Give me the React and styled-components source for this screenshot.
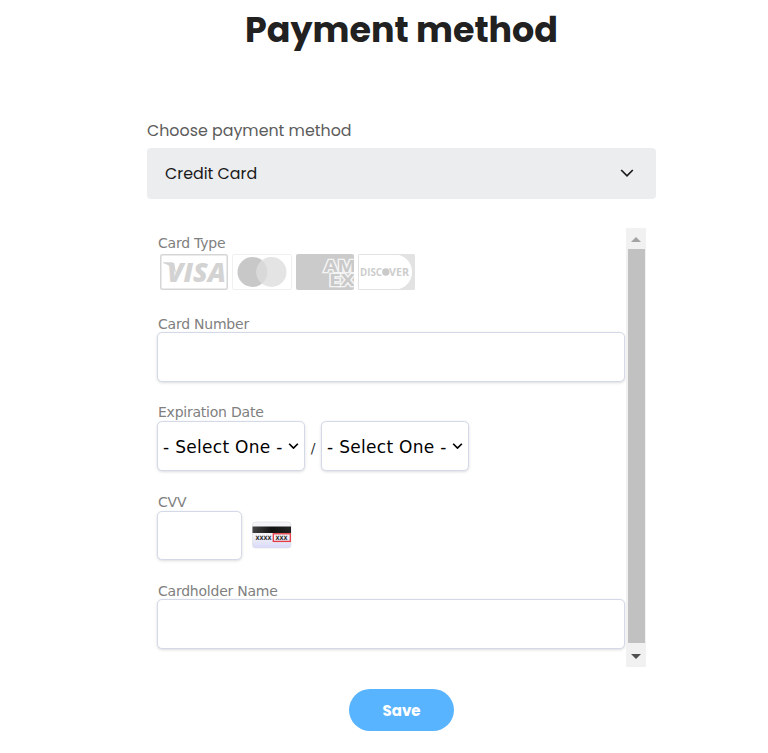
import React from 'react';
import styled, { createGlobalStyle } from 'styled-components';

const GlobalStyle = createGlobalStyle`
  * {
    box-sizing: border-box;
  }

  body {
    margin: 0;
    background: #ffffff;
    font-family: Poppins, Inter, sans-serif;
  }
`;

const Page = styled.main`
  display: flex;
  flex-direction: column;
  width: 509px;
  margin-left: 147px;
`;

const Title = styled.h1`
  margin: 0;
  height: 59px;
  line-height: 59px;
  font-size: 34.9px;
  font-weight: 700;
  color: #212121;
  text-align: center;
  white-space: nowrap;
`;

const MethodLabel = styled.label`
  margin-top: 60px;
  height: 29px;
  line-height: 24px;
  font-size: 15.85px;
  color: #5c5c5c;
`;

const MethodSelect = styled.button`
  display: flex;
  align-items: center;
  justify-content: space-between;
  height: 51px;
  padding: 0 22px 1px 18px;
  border: none;
  border-radius: 4px;
  background: #ecedef;
  font-family: inherit;
  font-size: 15.85px;
  color: #1a1a1a;
`;

const Frame = styled.section`
  display: flex;
  width: 499px;
  height: 439px;
  margin-top: 29px;
  font-family: Verdana, 'DejaVu Sans', sans-serif;
`;

const Form = styled.form`
  width: 479px;
  padding: 7px 0 0 10px;
`;

const Field = styled.div`
  display: flex;
  flex-direction: column;
  height: ${({ $height }) => $height}px;
`;

const FieldLabel = styled.label`
  height: ${({ $height }) => $height || 16}px;
  line-height: 16px;
  padding-left: 1px;
  font-size: 14px;
  letter-spacing: -0.23px;
  color: #808080;
  white-space: nowrap;
`;

const TextInput = styled.input`
  width: ${({ $width }) => $width}px;
  height: ${({ $height }) => $height || 50}px;
  border: 1px solid #d3d9e8;
  border-radius: 5px;
  background: #ffffff;
  box-shadow: 0 1px 3px rgba(0, 0, 0, 0.14);
`;

const DateRow = styled.div`
  display: flex;
  align-items: center;
`;

const DateSelect = styled.button`
  display: flex;
  align-items: center;
  justify-content: space-between;
  width: 148px;
  height: 50px;
  padding: 2px 5px 0;
  border: 1px solid #d3d9e8;
  border-radius: 5px;
  background: #ffffff;
  box-shadow: 0 1px 3px rgba(0, 0, 0, 0.14);
  font-family: inherit;
  font-size: 17px;
  letter-spacing: 0.3px;
  color: #000000;
  white-space: nowrap;

  svg {
    margin-bottom: 2px;
  }
`;

const Slash = styled.span`
  width: 16px;
  padding-top: 3px;
  font-size: 14px;
  color: #333333;
  text-align: center;
`;

const CardRow = styled.div`
  display: flex;
  gap: 4px;
  padding-left: 3px;
`;

const CvvRow = styled.div`
  display: flex;
  align-items: center;
  gap: 10px;

  svg {
    margin-bottom: 1px;
  }
`;

const ScrollBar = styled.div`
  display: flex;
  flex-direction: column;
  align-items: center;
  width: 20px;
  background: #f1f1f1;
`;

const ScrollArrow = styled.div`
  display: flex;
  align-items: center;
  justify-content: center;
  height: ${({ $height }) => $height}px;
  padding-top: 2px;
  color: ${({ $color }) => $color};
`;

const ScrollThumb = styled.div`
  flex: 1;
  width: 17px;
  margin-left: 1px;
  background: #c1c1c1;
`;

const SaveButton = styled.button`
  align-self: center;
  width: 105px;
  height: 42px;
  margin-top: 22px;
  border: none;
  border-radius: 21px;
  background: #59b4ff;
  font-family: inherit;
  font-size: 15px;
  font-weight: 700;
  color: #ffffff;
`;

function VisaLogo() {
  return (
    <svg width="68" height="36" viewBox="0 0 68 36">
      <rect x="0.75" y="0.75" width="66.5" height="34.5" rx="1.5" fill="#fff" stroke="#d6d6d6" strokeWidth="1.5" />
      <text
        x="7"
        y="27.5"
        fontFamily="Open Sans, sans-serif"
        fontSize="27"
        fontWeight="800"
        fontStyle="italic"
        fill="#d3d3d3"
        textLength="59"
        lengthAdjust="spacingAndGlyphs"
      >
        VISA
      </text>
      <path d="M3 8.3H12Q14 8.3 14.5 11L16 19Q11 11 3 9z" fill="#d3d3d3" />
    </svg>
  );
}

function MastercardLogo() {
  return (
    <svg width="60" height="36" viewBox="0 0 60 36">
      <rect x="0.5" y="0.5" width="59" height="35" rx="1.5" fill="#fff" stroke="#f0f0f0" />
      <circle cx="20.5" cy="18" r="15" fill="#c8c8c8" />
      <circle cx="39.5" cy="18" r="15" fill="#e4e4e4" />
      <path d="M30 6.4a15 15 0 0 1 0 23.2a15 15 0 0 1 0-23.2z" fill="#d9d9d9" />
    </svg>
  );
}

function AmexLogo() {
  return (
    <svg width="58" height="36" viewBox="0 0 58 36">
      <rect width="58" height="36" rx="2" fill="#cbcbcb" />
      <g
        fontFamily="Open Sans, sans-serif"
        fontSize="16"
        fontWeight="700"
        fill="#c9c9c9"
        stroke="#f4f4f4"
        strokeWidth="2.6"
        paintOrder="stroke"
      >
        <text x="28" y="17.5" textLength="32" lengthAdjust="spacingAndGlyphs">AM</text>
        <text x="33" y="31.5" textLength="26" lengthAdjust="spacingAndGlyphs">EX</text>
      </g>
    </svg>
  );
}

function DiscoverLogo() {
  return (
    <svg width="57" height="36" viewBox="0 0 57 36">
      <rect width="57" height="36" rx="1.5" fill="#e2e2e2" />
      <path d="M1 1H41C49 3 54 10 54 18S49 33 41 35H1z" fill="#fff" />
      <g fontFamily="Open Sans, sans-serif" fontSize="10.5" fontWeight="700" fill="#cdcdcd">
        <text x="2" y="21.8" textLength="22" lengthAdjust="spacingAndGlyphs">DISC</text>
        <text x="31" y="21.8" textLength="20" lengthAdjust="spacingAndGlyphs">VER</text>
      </g>
      <circle cx="27.8" cy="18" r="3.7" fill="#cacaca" />
    </svg>
  );
}

function CvvCard() {
  return (
    <svg width="40" height="28" viewBox="0 0 40 28">
      <defs>
        <linearGradient id="card" x2="0" y2="1">
          <stop offset="0.5" stopColor="#f4f4f8" />
          <stop offset="1" stopColor="#d9d9fa" />
        </linearGradient>
        <linearGradient id="stripe">
          <stop offset="0" stopColor="#444" />
          <stop offset="0.5" stopColor="#111" />
          <stop offset="1" stopColor="#222" />
        </linearGradient>
      </defs>
      <rect x="0.5" y="1" width="38.5" height="26" rx="3" fill="url(#card)" stroke="#dedee4" strokeWidth="0.7" />
      <rect x="0.5" y="5.5" width="38.5" height="6.5" fill="url(#stripe)" />
      <g fontFamily="DejaVu Sans, sans-serif" fontSize="5.8" fontWeight="700" fill="#222">
        <text x="3.5" y="18.7" textLength="16" lengthAdjust="spacingAndGlyphs">XXXX</text>
        <text x="23.5" y="18.7" textLength="12" lengthAdjust="spacingAndGlyphs">XXX</text>
      </g>
      <rect x="21.3" y="12.8" width="17" height="7.6" fill="none" stroke="#e33b42" strokeWidth="1.3" />
    </svg>
  );
}

function Chevron({ width, height, stroke }) {
  return (
    <svg width={width} height={height} viewBox="0 0 14 8">
      <path d="M1.2 1L7 6.8L12.8 1" fill="none" stroke="currentColor" strokeWidth={stroke} />
    </svg>
  );
}

function App() {
  return (
    <>
      <GlobalStyle />
      <Page>
        <Title>Payment method</Title>
        <MethodLabel>Choose payment method</MethodLabel>
        <MethodSelect type="button">
          Credit Card
          <Chevron width={14} height={8} stroke={1.7} />
        </MethodSelect>
        <Frame>
          <Form>
            <Field $height={81}>
              <FieldLabel $height={19}>Card Type</FieldLabel>
              <CardRow>
                <VisaLogo />
                <MastercardLogo />
                <AmexLogo />
                <DiscoverLogo />
              </CardRow>
            </Field>
            <Field $height={88}>
              <FieldLabel htmlFor="number">Card Number</FieldLabel>
              <TextInput id="number" $width={468} />
            </Field>
            <Field $height={90}>
              <FieldLabel $height={17}>Expiration Date</FieldLabel>
              <DateRow>
                <DateSelect type="button">
                  - Select One -
                  <Chevron width={11} height={6} stroke={2.2} />
                </DateSelect>
                <Slash>/</Slash>
                <DateSelect type="button">
                  - Select One -
                  <Chevron width={11} height={6} stroke={2.2} />
                </DateSelect>
              </DateRow>
            </Field>
            <Field $height={89}>
              <FieldLabel htmlFor="cvv" $height={17}>CVV</FieldLabel>
              <CvvRow>
                <TextInput id="cvv" $width={85} $height={49} />
                <CvvCard />
              </CvvRow>
            </Field>
            <Field $height={66}>
              <FieldLabel htmlFor="name">Cardholder Name</FieldLabel>
              <TextInput id="name" $width={468} />
            </Field>
          </Form>
          <ScrollBar>
            <ScrollArrow $height={21} $color="#a3a3a3">
              <svg width="10" height="5"><path d="M0 5L5 0L10 5z" fill="currentColor" /></svg>
            </ScrollArrow>
            <ScrollThumb />
            <ScrollArrow $height={24} $color="#505050">
              <svg width="10" height="5"><path d="M0 0L5 5L10 0z" fill="currentColor" /></svg>
            </ScrollArrow>
          </ScrollBar>
        </Frame>
        <SaveButton type="button">Save</SaveButton>
      </Page>
    </>
  );
}

export default App;
